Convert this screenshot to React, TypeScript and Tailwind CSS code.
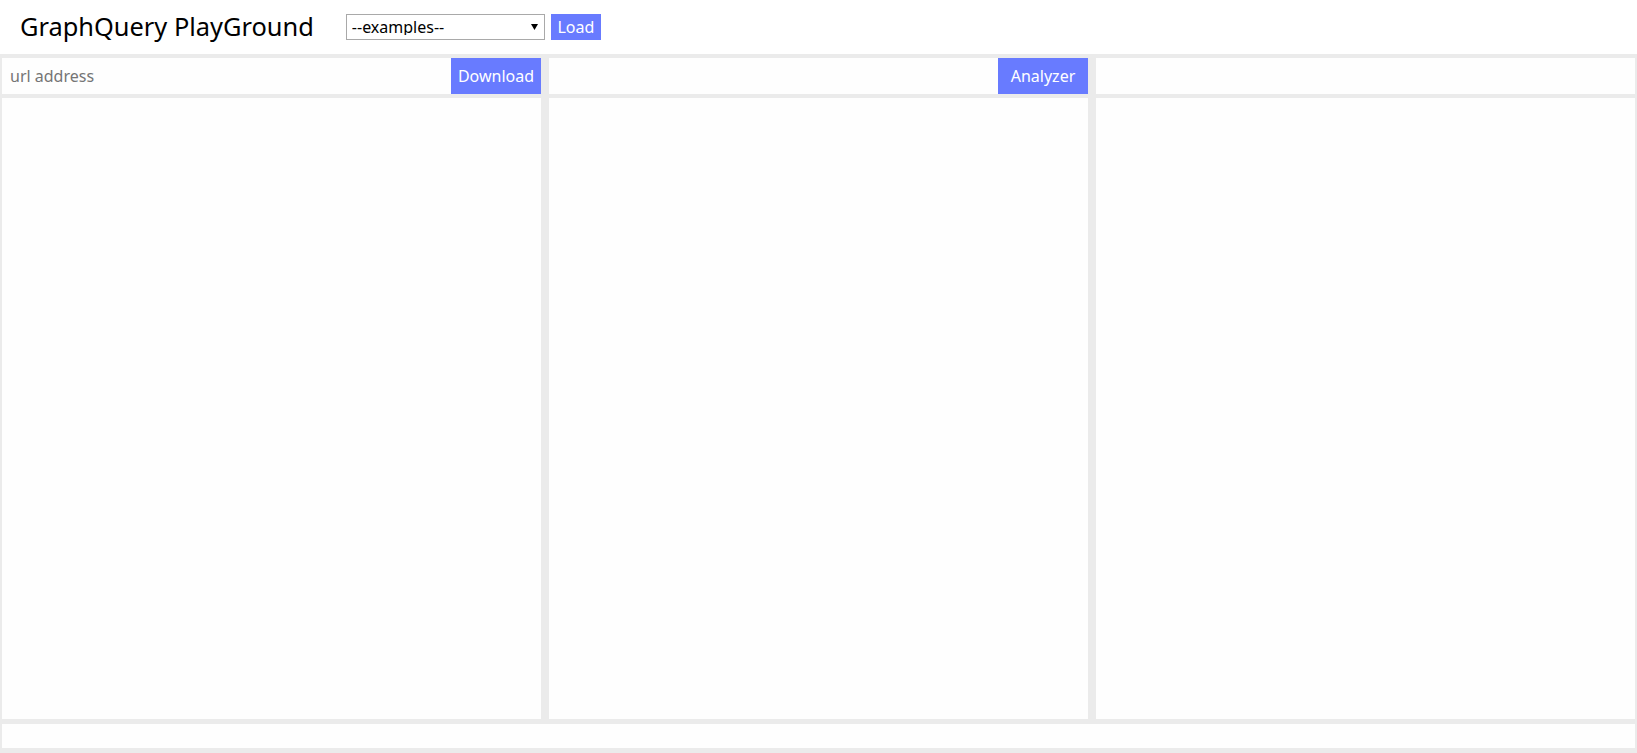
import { useState } from 'react';

const EXAMPLES = ['--examples--', 'html', 'json', 'xml'];

function BlueButton({ label, className = '' }: { label: string; className?: string }) {
  return (
    <button
      className={`h-full bg-[#687bff] text-[16px] text-white hover:bg-[#5a6ef5] ${className}`}
    >
      {label}
    </button>
  );
}

export default function App() {
  const [example, setExample] = useState(EXAMPLES[0]);
  const [url, setUrl] = useState('');

  return (
    <div className="flex h-screen flex-col bg-[#ebebeb] font-['Noto_Sans','Liberation_Sans',sans-serif]">
      <header className="flex h-[54px] shrink-0 items-center bg-white">
        <h1 className="ml-[20px] text-[25.4px] leading-none text-black">GraphQuery PlayGround</h1>
        <div className="relative ml-[32px] h-[26px] w-[199px]">
          <select
            value={example}
            onChange={(e) => setExample(e.target.value)}
            className="h-full w-full appearance-none border border-[#a9a9a9] bg-white pl-[5px] text-[16px] leading-none text-black outline-none"
          >
            {EXAMPLES.map((ex) => (
              <option key={ex}>{ex}</option>
            ))}
          </select>
          <svg
            className="pointer-events-none absolute right-[7px] top-[10px]"
            width="7"
            height="6"
            viewBox="0 0 7 6"
          >
            <path d="M0 0h7L3.5 6z" fill="#000" />
          </svg>
        </div>
        <button className="ml-[6px] h-[26px] w-[50px] bg-[#687bff] text-[16px] leading-none text-white">
          Load
        </button>
      </header>

      <main className="flex min-h-0 flex-1 flex-col gap-[4px] px-[2px] pb-[5px] pt-[4px]">
        <div className="grid h-[36px] shrink-0 grid-cols-3 gap-[8px]">
          <div className="flex bg-[#fefefe]">
            <input
              value={url}
              onChange={(e) => setUrl(e.target.value)}
              placeholder="url address"
              className="min-w-0 flex-1 bg-transparent pl-[8px] text-[16px] text-black outline-none placeholder:text-[#757575]"
            />
            <BlueButton label="Download" className="w-[90px]" />
          </div>
          <div className="flex justify-end bg-[#fefefe]">
            <BlueButton label="Analyzer" className="w-[90px]" />
          </div>
          <div className="bg-[#fefefe]" />
        </div>

        <div className="grid min-h-0 flex-1 grid-cols-3 gap-[8px]">
          <textarea className="resize-none bg-[#fefefe] p-2 font-['Liberation_Mono',monospace] text-sm outline-none" />
          <textarea className="resize-none bg-[#fefefe] p-2 font-['Liberation_Mono',monospace] text-sm outline-none" />
          <pre className="overflow-auto bg-[#fefefe] p-2 font-['Liberation_Mono',monospace] text-sm" />
        </div>

        <div className="mt-[1px] h-[24px] shrink-0 bg-[#fefefe]" />
      </main>
    </div>
  );
}
